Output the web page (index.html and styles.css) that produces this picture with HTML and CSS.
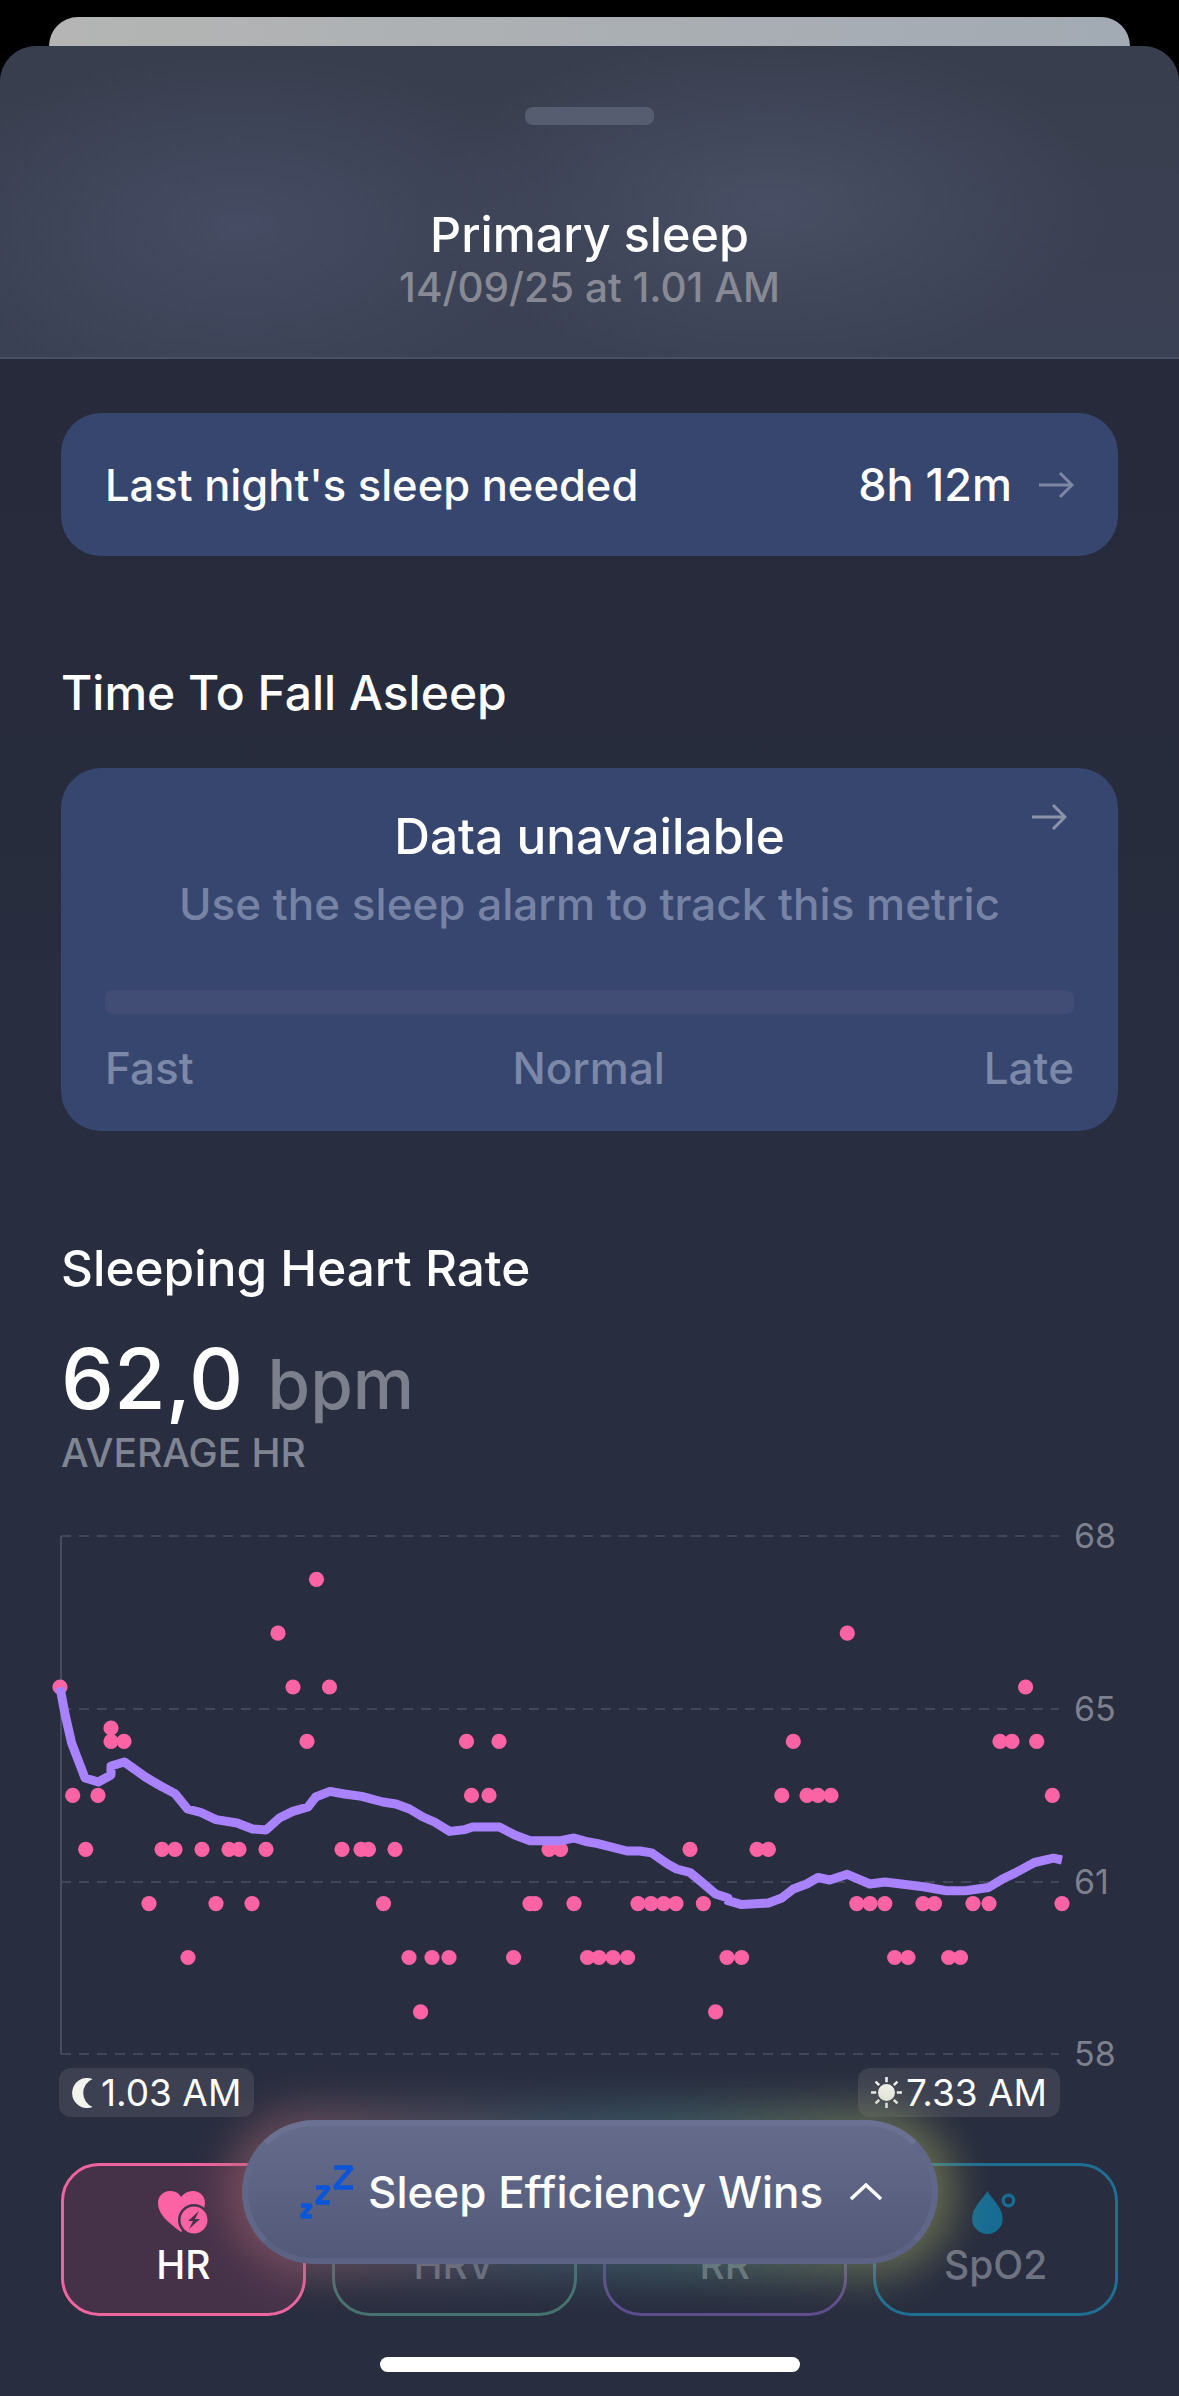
FILE: index.html
```html
<!DOCTYPE html>
<html lang="en">
<head>
  <meta charset="UTF-8" />
  <title>Primary sleep</title>
  <link rel="stylesheet" href="styles.css">
</head>
<body>
  <div class="back-card"></div>

  <div class="sheet">
    <div class="sheet-header">
      <div class="handle"></div>
      <div class="sheet-title">Primary sleep</div>
      <div class="sheet-date">14/09/25 at 1.01 AM</div>
    </div>

    <div class="sheet-body">
      <div class="need-card">
        <span>Last night's sleep needed</span>
        <span class="need-value">8h 12m
          <svg class="arrow" viewBox="0 0 36 28"><path d="M1 14h33M22 2l12 12-12 12"/></svg>
        </span>
      </div>

      <h2 class="section-title">Time To Fall Asleep</h2>
      <div class="latency-card">
        <svg class="arrow arrow-corner" viewBox="0 0 36 28"><path d="M1 14h33M22 2l12 12-12 12"/></svg>
        <div class="latency-title">Data unavailable</div>
        <div class="latency-sub">Use the sleep alarm to track this metric</div>
        <div class="latency-track"></div>
        <div class="latency-labels">
          <span>Fast</span>
          <span>Normal</span>
          <span>Late</span>
        </div>
      </div>

      <h2 class="section-title hr-title">Sleeping Heart Rate</h2>
      <div class="hr-value">62,0 <span class="hr-unit">bpm</span></div>
      <div class="hr-caption">AVERAGE HR</div>

      <svg class="chart" viewBox="61 1530 1058 538">
        <g class="grid">
          <path d="M61 1536H1059M61 1709H1059M61 1882H1059M61 2054H1059"/>
        </g>
        <path class="axis" d="M61 1536V2054"/>
        <g class="chart-labels">
          <text x="1074" y="1548">68</text>
          <text x="1074" y="1721">65</text>
          <text x="1074" y="1894">61</text>
          <text x="1074" y="2066">58</text>
        </g>
        <g class="dots">
          <circle cx="316.5" cy="1579.3" r="7.6"/>
          <circle cx="278" cy="1633.2" r="7.6"/><circle cx="847.3" cy="1633.2" r="7.6"/>
          <circle cx="60" cy="1687" r="7.6"/><circle cx="293" cy="1687" r="7.6"/><circle cx="329.5" cy="1687" r="7.6"/><circle cx="1025.6" cy="1687" r="7.6"/>
          <circle cx="111" cy="1728" r="7.6"/>
          <circle cx="111" cy="1741.4" r="7.6"/><circle cx="124" cy="1741.4" r="7.6"/><circle cx="307" cy="1741.4" r="7.6"/><circle cx="466.5" cy="1741.4" r="7.6"/><circle cx="499" cy="1741.4" r="7.6"/><circle cx="793.3" cy="1741.4" r="7.6"/><circle cx="1000" cy="1741.4" r="7.6"/><circle cx="1012" cy="1741.4" r="7.6"/><circle cx="1036.7" cy="1741.4" r="7.6"/>
          <circle cx="72.7" cy="1795.4" r="7.6"/><circle cx="98" cy="1795.4" r="7.6"/><circle cx="471.5" cy="1795.4" r="7.6"/><circle cx="489" cy="1795.4" r="7.6"/><circle cx="781.8" cy="1795.4" r="7.6"/><circle cx="807" cy="1795.4" r="7.6"/><circle cx="818" cy="1795.4" r="7.6"/><circle cx="831" cy="1795.4" r="7.6"/><circle cx="1052.4" cy="1795.4" r="7.6"/>
          <circle cx="85.7" cy="1849.3" r="7.6"/><circle cx="162" cy="1849.3" r="7.6"/><circle cx="175" cy="1849.3" r="7.6"/><circle cx="202" cy="1849.3" r="7.6"/><circle cx="229" cy="1849.3" r="7.6"/><circle cx="239" cy="1849.3" r="7.6"/><circle cx="266" cy="1849.3" r="7.6"/><circle cx="342" cy="1849.3" r="7.6"/><circle cx="361" cy="1849.3" r="7.6"/><circle cx="368.5" cy="1849.3" r="7.6"/><circle cx="395" cy="1849.3" r="7.6"/><circle cx="549" cy="1849.3" r="7.6"/><circle cx="560.6" cy="1849.3" r="7.6"/><circle cx="690" cy="1849.3" r="7.6"/><circle cx="757" cy="1849.3" r="7.6"/><circle cx="768.4" cy="1849.3" r="7.6"/>
          <circle cx="149" cy="1903.6" r="7.6"/><circle cx="216" cy="1903.6" r="7.6"/><circle cx="252" cy="1903.6" r="7.6"/><circle cx="383.5" cy="1903.6" r="7.6"/><circle cx="530" cy="1903.6" r="7.6"/><circle cx="535" cy="1903.6" r="7.6"/><circle cx="574" cy="1903.6" r="7.6"/><circle cx="638" cy="1903.6" r="7.6"/><circle cx="651" cy="1903.6" r="7.6"/><circle cx="663.6" cy="1903.6" r="7.6"/><circle cx="676" cy="1903.6" r="7.6"/><circle cx="703.4" cy="1903.6" r="7.6"/><circle cx="856.8" cy="1903.6" r="7.6"/><circle cx="870" cy="1903.6" r="7.6"/><circle cx="884.8" cy="1903.6" r="7.6"/><circle cx="923" cy="1903.6" r="7.6"/><circle cx="934.5" cy="1903.6" r="7.6"/><circle cx="973" cy="1903.6" r="7.6"/><circle cx="989" cy="1903.6" r="7.6"/><circle cx="1062" cy="1903.6" r="7.6"/>
          <circle cx="188" cy="1957.5" r="7.6"/><circle cx="409" cy="1957.5" r="7.6"/><circle cx="432" cy="1957.5" r="7.6"/><circle cx="449" cy="1957.5" r="7.6"/><circle cx="513.6" cy="1957.5" r="7.6"/><circle cx="587.5" cy="1957.5" r="7.6"/><circle cx="599" cy="1957.5" r="7.6"/><circle cx="613" cy="1957.5" r="7.6"/><circle cx="627.6" cy="1957.5" r="7.6"/><circle cx="727" cy="1957.5" r="7.6"/><circle cx="741.6" cy="1957.5" r="7.6"/><circle cx="894.7" cy="1957.5" r="7.6"/><circle cx="908" cy="1957.5" r="7.6"/><circle cx="948.7" cy="1957.5" r="7.6"/><circle cx="960.5" cy="1957.5" r="7.6"/>
          <circle cx="420.6" cy="2011.8" r="7.6"/><circle cx="715.6" cy="2011.8" r="7.6"/>
        </g>
        <polyline class="trend" points="60,1687.5 65,1714 71.6,1743 85,1778 98.4,1782 111,1775 111,1766 124.4,1762 145.4,1777 160.7,1786 175,1793.6 187.5,1809 201,1812.5 216,1819.6 237,1823 252.6,1829 266,1830 279.4,1818 292.8,1811.4 308,1807 315.7,1797 330,1791.4 344.4,1794 361.7,1796.4 382.7,1802 396,1804 409.5,1809 423,1817 434.4,1822 449.7,1831.4 465,1829.6 472.6,1827 499.4,1827 514.7,1835 530,1840.7 560.7,1840.7 574,1838 587.4,1841.8 598,1843.6 626.8,1851 640,1851 651.7,1852.9 667,1863.6 676.6,1869 690,1872.5 701.5,1882 715.6,1894 728,1898 728,1900.7 741.6,1904.6 768.4,1903 781.8,1898 793.3,1889 806.7,1884 818,1877.5 829.7,1880 847.3,1874.3 869.9,1884 885,1882 923.4,1886.8 946.4,1890.7 965.5,1890.7 988.5,1887.5 1002,1879.3 1015.3,1872.9 1034.4,1862.5 1053.5,1858.2 1062,1860"/>
      </svg>

      <div class="time-row">
        <div class="time-pill">
          <svg class="time-icon" viewBox="0 0 22 28"><path d="M20 1A14 14 0 1 0 20 27 14 14 0 0 1 20 1Z"/></svg>
          1.03 AM
        </div>
        <div class="time-pill">
          <svg class="time-icon sun" viewBox="0 0 32 32"><circle cx="16" cy="16" r="7"/><path d="M16 1v5M16 26v5M1 16h5M26 16h5M5.4 5.4l3.5 3.5M23.1 23.1l3.5 3.5M5.4 26.6l3.5-3.5M23.1 8.900l3.500-3.500"/></svg>
          7.33 AM
        </div>
      </div>

      <div class="tabs">
        <div class="tab tab-hr">
          <svg class="tab-icon" viewBox="0 0 52 44">
            <path class="pink" d="M24 42C12 33 1 25 1 13 1 6 6 1 13 1c5 0 9 2 11 6 3-4 7-6 12-6 7 0 12 5 12 12 0 10-10 18-24 29Z"/>
            <circle cx="37" cy="30" r="16" fill="#453249"/>
            <circle class="pink" cx="37" cy="30" r="13.500"/>
            <path fill="#453249" d="M42 21l-11 10h5l-4 8 11-10h-5Z"/>
          </svg>
          <span>HR</span>
        </div>
        <div class="tab tab-hrv"><span>HRV</span></div>
        <div class="tab tab-rr"><span>RR</span></div>
        <div class="tab tab-spo2">
          <svg class="tab-icon" viewBox="0 0 52 46">
            <path fill="#186c93" d="M17 1C12 10 1 18 1 30a16 16 0 0 0 32 0C33 18 22 10 17 1Z"/>
            <circle cx="39" cy="11" r="5.500" fill="none" stroke="#186c93" stroke-width="3.500"/>
          </svg>
          <span>SpO2</span>
        </div>
      </div>
    </div>
  </div>

  <div class="wins-glow"></div>
  <div class="wins-pill">
    <svg class="zzz" viewBox="0 0 56 56">
      <path d="M1 41.500H11L1.500 52.500H12M16 23.500H29L16.500 38.500H30M34 3.500H52L34.500 23.500H53"/>
    </svg>
    <span>Sleep Efficiency Wins</span>
    <svg class="chevron" viewBox="0 0 34 18"><path d="M2 16 17 2l15 14"/></svg>
  </div>

  <div class="home-bar"></div>
</body>
</html>
```

FILE: styles.css
```css
* {
  box-sizing: border-box;
}

html, body {
  margin: 0;
  height: 2396px;
  overflow: hidden;
}

body {
  position: relative;
  background: #000;
  padding-top: 17px;
  font-family: 'Inter', sans-serif;
  font-weight: 500;
  color: #fff;
}

.back-card {
  height: 29px;
  margin: 0 49px;
  border-radius: 30px 30px 0 0;
  background: linear-gradient(90deg, #b4b5b4, #a2aab3);
}

.sheet {
  height: 2350px;
  border-radius: 36px 36px 0 0;
  background: #282d3f;
  overflow: hidden;
}

.sheet-header {
  height: 313px;
  padding-top: 61px;
  text-align: center;
  border-bottom: 2px solid #4a5063;
  background:
    radial-gradient(ellipse 340px 170px at 770px 160px, #484f64, rgba(72, 79, 100, 0)),
    radial-gradient(ellipse 320px 170px at 240px 180px, #454c63, rgba(69, 76, 99, 0)),
    linear-gradient(180deg, #393e4e, #3b4154);
}

.handle {
  width: 129px;
  height: 18px;
  margin: 0 auto;
  border-radius: 8px;
  background: #575d70;
}

.sheet-title {
  margin-top: 82px;
  font-size: 48.5px;
  line-height: 56px;
}

.sheet-date {
  margin-top: 3px;
  font-size: 40.5px;
  line-height: 44px;
  color: #878a94;
}

.sheet-body {
  padding: 54px 61px 0;
  background: linear-gradient(180deg, #262a3a, #282d3f 700px);
}

.need-card {
  display: flex;
  justify-content: space-between;
  align-items: center;
  height: 143px;
  padding: 0 44px;
  border-radius: 40px;
  background: #37466f;
  font-size: 43.500px;
}

.need-value {
  display: flex;
  align-items: center;
  gap: 26px;
  font-size: 45px;
}

.arrow {
  width: 36px;
  height: 28px;
  fill: none;
  stroke: #7d87a4;
  stroke-width: 3;
}

.section-title {
  margin: 110px 0 0;
  font-size: 48px;
  line-height: 54px;
  font-weight: 500;
}

.latency-card {
  position: relative;
  height: 363px;
  margin-top: 48px;
  padding: 38px 44px 0;
  border-radius: 40px;
  background: #37466f;
  text-align: center;
}

.arrow-corner {
  position: absolute;
  top: 35px;
  right: 51px;
  stroke: #8c93a8;
}

.latency-title {
  font-size: 49.5px;
  line-height: 60px;
}

.latency-sub {
  margin-top: 8px;
  font-size: 44px;
  line-height: 60px;
  color: #7683a4;
}

.latency-track {
  height: 24px;
  margin-top: 56px;
  border-radius: 8px;
  background: #414d75;
}

.latency-labels {
  display: flex;
  justify-content: space-between;
  margin-top: 30px;
  font-size: 44px;
  line-height: 48px;
  color: #7c88a8;
}

.hr-title {
  margin-top: 110px;
  font-size: 49.5px;
}

.hr-value {
  margin-top: 36px;
  font-size: 84px;
  line-height: 96px;
}

.hr-unit {
  margin-left: 2px;
  font-size: 69px;
  color: #7c808c;
}

.hr-caption {
  margin-top: -1px;
  font-size: 39px;
  line-height: 44px;
  color: #808593;
}

.chart {
  display: block;
  width: 1058px;
  height: 538px;
  margin-top: 55px;
  overflow: visible;
}

.grid path {
  fill: none;
  stroke: #41465a;
  stroke-width: 2;
  stroke-dasharray: 10 8;
}

.axis {
  stroke: #474c5e;
  stroke-width: 2;
}

.chart-labels text {
  font-size: 34px;
  font-weight: 400;
  fill: #7d818d;
}

.dots circle {
  fill: #fb63a5;
}

.trend {
  fill: none;
  stroke: #a982ff;
  stroke-width: 9;
  stroke-linejoin: round;
}

.time-row {
  display: flex;
  justify-content: space-between;
  margin: 0 58px 0 -2px;
}

.time-pill {
  display: flex;
  align-items: center;
  gap: 6px;
  height: 49px;
  padding: 0 13px 0 12px;
  border-radius: 12px;
  background: #3c4050;
  font-size: 37px;
  font-weight: 400;
}

.time-icon {
  width: 24px;
  height: 30px;
  fill: #f3f3ee;
}

.sun {
  width: 33px;
  height: 33px;
  margin-right: -3px;
  stroke: #f3f3ee;
  stroke-width: 2.500;
}

.tabs {
  display: grid;
  grid-template-columns: repeat(4, 1fr);
  gap: 26px;
  margin-top: 46px;
}

.tab {
  display: flex;
  flex-direction: column;
  align-items: center;
  justify-content: flex-end;
  gap: 8px;
  height: 153px;
  padding-bottom: 25px;
  border: 3px solid;
  border-radius: 38px;
  font-size: 39px;
  line-height: 46px;
  color: #6e7382;
}

.tab-hr {
  border-color: #ee659f;
  background: #453249;
  color: #fff;
}

.tab-hrv {
  border-color: #47736f;
}

.tab-rr {
  border-color: #5f4d8c;
}

.tab-spo2 {
  border-color: #1f6f93;
}

.tab-icon {
  width: 52px;
  height: 44px;
}

.pink {
  fill: #fb63a5;
}

.wins-glow {
  position: absolute;
  left: 226px;
  top: 2106px;
  width: 728px;
  height: 172px;
  border-radius: 86px;
  background: linear-gradient(90deg, #a8606c, #4d6a78 45%, #4d7a80 60%, #a3a45a);
  filter: blur(20px);
  opacity: 0.55;
}

.wins-pill {
  position: absolute;
  left: 242px;
  top: 2120px;
  display: flex;
  align-items: center;
  width: 696px;
  height: 144px;
  padding-left: 52px;
  border: 6px solid;
  border-color: #6b7192 #616788 #5c6283;
  border-radius: 72px;
  background: linear-gradient(180deg, #656c8b, #535978);
  font-size: 44px;
}

.zzz {
  flex: none;
  width: 56px;
  height: 56px;
  margin-right: 12px;
  fill: none;
  stroke: #0a55d8;
  stroke-width: 4.500;
  stroke-linejoin: bevel;
}

.chevron {
  width: 34px;
  height: 18px;
  margin-left: 26px;
  fill: none;
  stroke: #fff;
  stroke-width: 3.500;
}

.home-bar {
  position: absolute;
  left: 380px;
  top: 2357px;
  width: 420px;
  height: 15px;
  border-radius: 8px;
  background: #fff;
}
```
